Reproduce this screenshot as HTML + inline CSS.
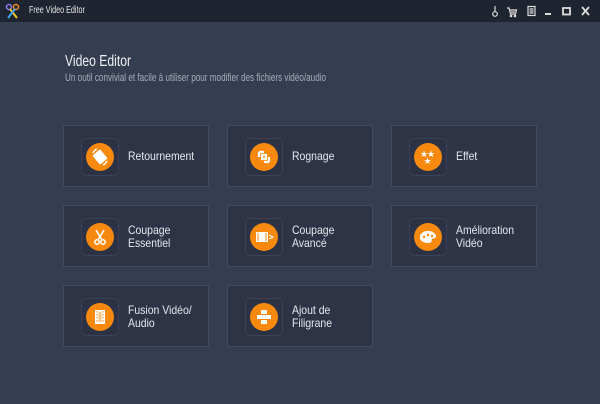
<!DOCTYPE html>
<html><head><meta charset="utf-8"><style>
*{margin:0;padding:0;box-sizing:border-box}
body{width:600px;height:404px;background:#353e51;font-family:"Liberation Sans",sans-serif;position:relative;overflow:hidden}
.tb{position:absolute;left:0;top:0;width:600px;height:22px;background:#1f2431;color:#e8e8e8;font-size:10px}
.tb .t{position:absolute;left:29px;top:5px;transform:scaleX(.72);transform-origin:left;white-space:nowrap}
h1{position:absolute;left:65px;top:53px;font-size:16px;font-weight:normal;color:#f0f0f0;transform:scaleX(.76);transform-origin:left;white-space:nowrap}
.sub{position:absolute;left:65px;top:72px;font-size:11px;color:#a6adbb;transform:scaleX(.74);transform-origin:left;white-space:nowrap}
.c{position:absolute;width:146px;height:62px;background:#2e3446;border:1px solid #42495b}
.ib{position:absolute;left:17px;top:12px;width:38px;height:38px;border:1px solid #3c4356;border-radius:5px;background:#2c3244}
.ci{position:absolute;left:4px;top:4px;width:28px;height:28px;border-radius:50%;background:#f7890f}
.ci svg{position:absolute;left:0;top:0}
.lb{position:absolute;left:64px;color:#e6e8ee;font-size:12px;line-height:13px;transform:scaleX(.87);transform-origin:left;white-space:nowrap}
</style></head><body>
<div class="tb">
<svg style="position:absolute;left:5px;top:3px" width="16" height="16" viewBox="0 0 16 16"><circle cx="4" cy="4" r="2.5" fill="none" stroke="#8a7cf0" stroke-width="1.5"/><circle cx="11" cy="4" r="2.5" fill="none" stroke="#f08a2a" stroke-width="1.5"/><path d="M5 6 L12 15" stroke="#f5c518" stroke-width="2"/><path d="M10 6 L3 15" stroke="#3fa9f5" stroke-width="2"/></svg>
<span class="t">Free Video Editor</span>
<svg style="position:absolute;left:490px;top:5px" width="110" height="13" viewBox="0 0 110 13">
<g stroke="#ddd" fill="none" stroke-width="1.2">
<path d="M5 1v6"/><circle cx="5" cy="9" r="2.3"/>
<path d="M17 3h2l1.5 6h5l1-4h-7M21 5h5M21 7h4"/><circle cx="21" cy="11" r=".7"/><circle cx="25" cy="11" r=".7"/>
<rect x="38" y="1.5" width="7" height="9"/><path d="M39.5 4h4M39.5 6h4M39.5 8h4"/>
<path d="M55 9h6" stroke-width="2"/>
<rect x="73" y="3" width="7" height="6.5" stroke-width="1.8"/>
<path d="M92 2l7 8M99 2l-7 8" stroke-width="1.8"/>
</g></svg>
</div>
<h1>Video Editor</h1>
<div class="sub">Un outil convivial et facile à utiliser pour modifier des fichiers vidéo/audio</div>

<div class="c" style="left:63px;top:125px"><div class="ib"><div class="ci"><svg width="28" height="28"><g transform="rotate(-40 14 14)"><rect x="9" y="8" width="10" height="12" rx="1" fill="#fff"/></g><path d="M7 10a8 8 0 0 1 4-4M21 18a8 8 0 0 1-4 4" stroke="#fff" fill="none" stroke-width="1.5"/></svg></div></div><div class="lb" style="top:24px">Retournement</div></div>
<div class="c" style="left:227px;top:125px"><div class="ib"><div class="ci"><svg width="28" height="28"><path d="M9 9h5M9 9v5M19 19h-5M19 19v-5M12 12h4v4h-4z" stroke="#fff" stroke-width="2.2" fill="none"/></svg></div></div><div class="lb" style="top:24px">Rognage</div></div>
<div class="c" style="left:391px;top:125px"><div class="ib"><div class="ci"><svg width="28" height="28" fill="#fff" font-size="9" font-family="DejaVu Sans"><text x="6" y="14">★</text><text x="13" y="14">★</text><text x="9.5" y="21">★</text></svg></div></div><div class="lb" style="top:24px">Effet</div></div>

<div class="c" style="left:63px;top:205px"><div class="ib"><div class="ci"><svg width="28" height="28"><path d="M10 7l6 10M18 7l-6 10" stroke="#fff" stroke-width="1.6"/><circle cx="11" cy="19" r="2.2" fill="none" stroke="#fff" stroke-width="1.5"/><circle cx="17" cy="19" r="2.2" fill="none" stroke="#fff" stroke-width="1.5"/></svg></div></div><div class="lb" style="top:18px">Coupage<br>Essentiel</div></div>
<div class="c" style="left:227px;top:205px"><div class="ib"><div class="ci"><svg width="28" height="28"><rect x="6" y="9" width="12" height="10" fill="#fff"/><path d="M8 10v8M16 10v8" stroke="#f7890f"/><path d="M19 12l4 2-4 2" stroke="#fff" fill="none"/></svg></div></div><div class="lb" style="top:18px">Coupage<br>Avancé</div></div>
<div class="c" style="left:391px;top:205px"><div class="ib"><div class="ci"><svg width="28" height="28"><path d="M6 15a8 6 0 0 1 16-2c0 3-3 2-4 3s1 4-4 4a8 5 0 0 1-8-5z" fill="#fff"/><circle cx="10" cy="14" r="1.2" fill="#f7890f"/><circle cx="14" cy="12" r="1.2" fill="#f7890f"/><circle cx="18" cy="13" r="1.2" fill="#f7890f"/></svg></div></div><div class="lb" style="top:18px">Amélioration<br>Vidéo</div></div>

<div class="c" style="left:63px;top:285px"><div class="ib"><div class="ci"><svg width="28" height="28"><rect x="9" y="7" width="10" height="14" fill="#fff"/><path d="M11 8v12M17 8v12" stroke="#f7890f" stroke-dasharray="1.5 1.5"/><rect x="12.5" y="9" width="3" height="10" fill="#f7890f" opacity=".5"/></svg></div></div><div class="lb" style="top:18px">Fusion Vidéo/<br>Audio</div></div>
<div class="c" style="left:227px;top:285px"><div class="ib"><div class="ci"><svg width="28" height="28"><rect x="11" y="7" width="6" height="4" fill="#fff"/><rect x="7" y="12" width="14" height="4" fill="#fff"/><rect x="11" y="17" width="6" height="4" fill="#fff"/></svg></div></div><div class="lb" style="top:18px">Ajout de<br>Filigrane</div></div>
</body></html>
